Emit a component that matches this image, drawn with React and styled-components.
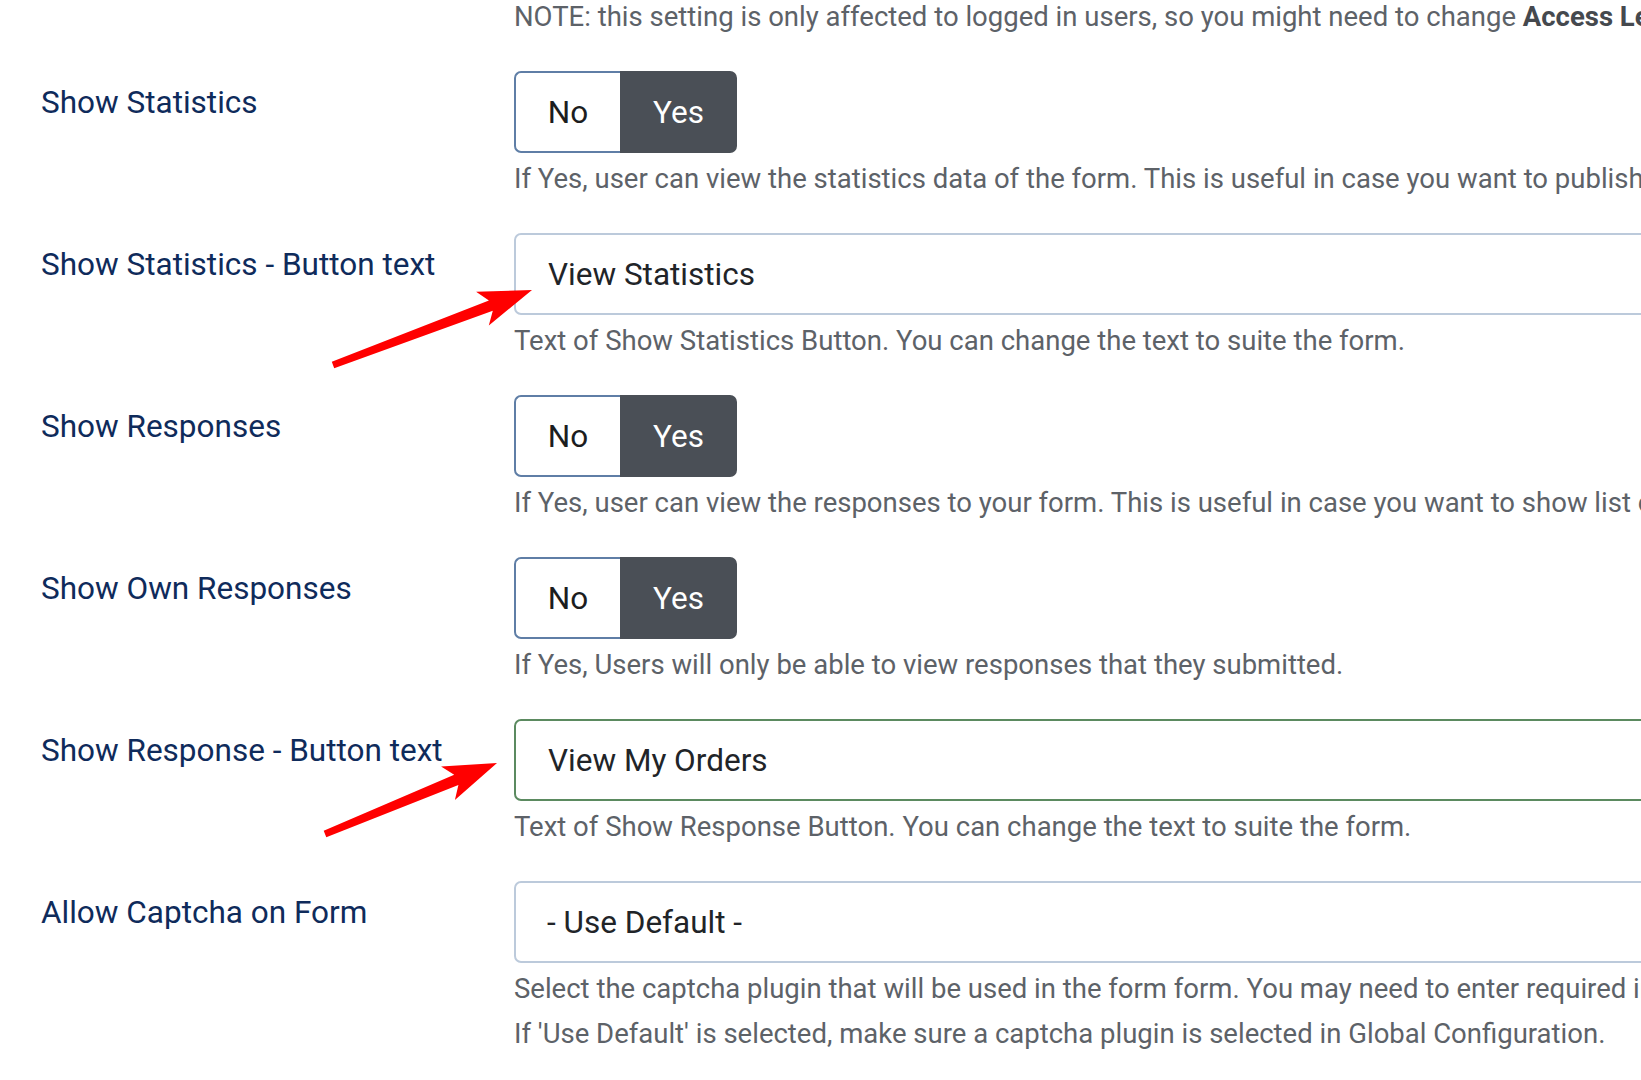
import styled, { createGlobalStyle } from 'styled-components'

const Global = createGlobalStyle`
  html, body {
    margin: 0;
    padding: 0;
    background: #fff;
    overflow: hidden;
  }
  body {
    font-family: Roboto, "Liberation Sans", Arial, sans-serif;
  }
`

const Page = styled.div`
  position: relative;
  width: 1641px;
  height: 1080px;
  overflow: hidden;
  padding-left: 41px;
  box-sizing: border-box;
`

const Stack = styled.div`
  margin-top: -1px;
`

const Row = styled.div`
  display: grid;
  grid-template-columns: 473px 1400px;
  margin-bottom: 36px;
`

const Label = styled.div`
  padding-top: 14px;
  font-size: 31.5px;
  line-height: 36px;
  color: #0f2b5b;
  white-space: nowrap;
`

const Control = styled.div`
  display: flex;
  flex-direction: column;
  min-width: 0;
`

const Help = styled.div`
  margin-top: ${(p) => (p.$gap ? `${p.$gap}px` : '0')};
  font-size: 27.5px;
  line-height: 36px;
  color: #5d6268;
  white-space: nowrap;

  b {
    color: #45494e;
    font-weight: 700;
  }
`

const Toggle = styled.div`
  display: flex;
  align-self: flex-start;
  height: 82px;
  margin-bottom: 8px;
`

const Option = styled.div`
  display: flex;
  align-items: center;
  justify-content: center;
  box-sizing: border-box;
  width: ${(p) => (p.$active ? '117px' : '106px')};
  font-size: 31.5px;
  color: ${(p) => (p.$active ? '#ffffff' : '#1b1d20')};
  background: ${(p) => (p.$active ? '#4a4f56' : '#ffffff')};
  border: 2px solid ${(p) => (p.$active ? '#4a4f56' : '#5f7ea6')};
  border-right: ${(p) => (p.$active ? undefined : 'none')};
  border-radius: ${(p) => (p.$active ? '0 7px 7px 0' : '7px 0 0 7px')};
`

const Field = styled.div`
  display: flex;
  align-items: center;
  box-sizing: border-box;
  height: 82px;
  margin-bottom: 8px;
  padding-left: ${(p) => (p.$select ? '31px' : '32px')};
  font-size: 31.5px;
  color: #212428;
  background: #fff;
  border: 2px solid ${(p) => (p.$valid ? '#5b8a60' : '#bccadb')};
  border-radius: 7px;
`

const Overlay = styled.svg`
  position: absolute;
  top: 0;
  left: 0;
  pointer-events: none;
`

function arrowPoints(tail, tip, headLen, headHalf, shaftTail, shaftHead) {
  const dx = tip[0] - tail[0]
  const dy = tip[1] - tail[1]
  const len = Math.hypot(dx, dy)
  const ux = dx / len
  const uy = dy / len
  const nx = -uy
  const ny = ux
  const bx = tip[0] - ux * headLen
  const by = tip[1] - uy * headLen
  const jx = tip[0] - ux * (headLen - 9)
  const jy = tip[1] - uy * (headLen - 9)
  const pts = [
    [tail[0] + (nx * shaftTail) / 2, tail[1] + (ny * shaftTail) / 2],
    [jx + (nx * shaftHead) / 2, jy + (ny * shaftHead) / 2],
    [bx + nx * headHalf, by + ny * headHalf],
    tip,
    [bx - nx * headHalf, by - ny * headHalf],
    [jx - (nx * shaftHead) / 2, jy - (ny * shaftHead) / 2],
    [tail[0] - (nx * shaftTail) / 2, tail[1] - (ny * shaftTail) / 2],
  ]
  return pts.map((p) => `${p[0].toFixed(1)},${p[1].toFixed(1)}`).join(' ')
}

function YesNo() {
  return (
    <Toggle>
      <Option>No</Option>
      <Option $active>Yes</Option>
    </Toggle>
  )
}

export default function App() {
  return (
    <>
      <Global />
      <Page>
        <Stack>
          <Row>
            <Label />
            <Control>
              <Help>
                NOTE: this setting is only affected to logged in users, so you might need to change <b>Access Level</b> of the form
              </Help>
            </Control>
          </Row>

          <Row>
            <Label>Show Statistics</Label>
            <Control>
              <YesNo />
              <Help>If Yes, user can view the statistics data of the form. This is useful in case you want to publish the results of the form.</Help>
            </Control>
          </Row>

          <Row>
            <Label>Show Statistics - Button text</Label>
            <Control>
              <Field>View Statistics</Field>
              <Help>Text of Show Statistics Button. You can change the text to suite the form.</Help>
            </Control>
          </Row>

          <Row>
            <Label>Show Responses</Label>
            <Control>
              <YesNo />
              <Help>If Yes, user can view the responses to your form. This is useful in case you want to show list of submissions.</Help>
            </Control>
          </Row>

          <Row>
            <Label>Show Own Responses</Label>
            <Control>
              <YesNo />
              <Help>If Yes, Users will only be able to view responses that they submitted.</Help>
            </Control>
          </Row>

          <Row>
            <Label>Show Response - Button text</Label>
            <Control>
              <Field $valid>View My Orders</Field>
              <Help>Text of Show Response Button. You can change the text to suite the form.</Help>
            </Control>
          </Row>

          <Row>
            <Label>Allow Captcha on Form</Label>
            <Control>
              <Field $select>- Use Default -</Field>
              <Help>Select the captcha plugin that will be used in the form form. You may need to enter required information for your captcha plugin.</Help>
              <Help $gap={9}>If 'Use Default' is selected, make sure a captcha plugin is selected in Global Configuration.</Help>
            </Control>
          </Row>
        </Stack>

        <Overlay width="1641" height="1080" viewBox="0 0 1641 1080">
          <polygon fill="#ff0000" points={arrowPoints([333, 365], [532, 290], 53, 18, 7, 11)} />
          <polygon fill="#ff0000" points={arrowPoints([325, 834], [497, 763], 53, 18, 7, 11)} />
        </Overlay>
      </Page>
    </>
  )
}
